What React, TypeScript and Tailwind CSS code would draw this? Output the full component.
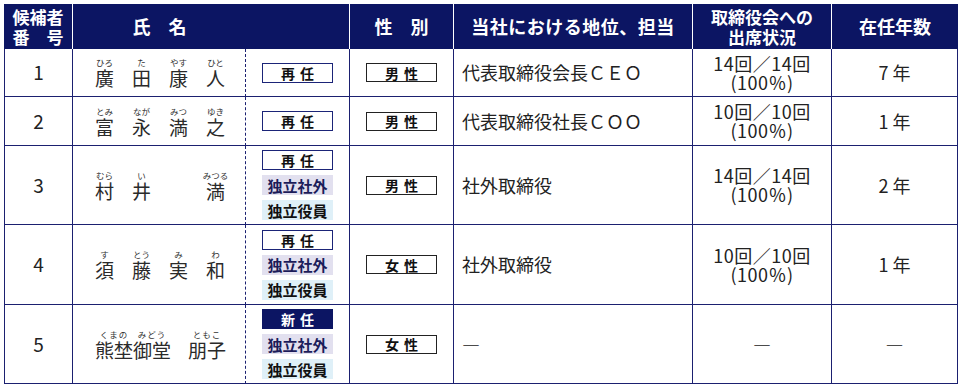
import React from 'react';

type Slot = { k: string; r: string } | null;

interface Row {
  no: string;
  slots?: Slot[];
  badges: string[];
  gender: string;
  pos: string;
  att: string[] | null;
  years: string | null;
}

const rows: Row[] = [
  {
    no: '1',
    slots: [{ k: '廣', r: 'ひろ' }, { k: '田', r: 'た' }, { k: '康', r: 'やす' }, { k: '人', r: 'ひと' }],
    badges: ['再任'],
    gender: '男性',
    pos: '代表取締役会長ＣＥＯ',
    att: ['14回／14回', '(100％)'],
    years: '7',
  },
  {
    no: '2',
    slots: [{ k: '富', r: 'とみ' }, { k: '永', r: 'なが' }, { k: '満', r: 'みつ' }, { k: '之', r: 'ゆき' }],
    badges: ['再任'],
    gender: '男性',
    pos: '代表取締役社長ＣＯＯ',
    att: ['10回／10回', '(100％)'],
    years: '1',
  },
  {
    no: '3',
    slots: [{ k: '村', r: 'むら' }, { k: '井', r: 'い' }, null, { k: '満', r: 'みつる' }],
    badges: ['再任', '独立社外', '独立役員'],
    gender: '男性',
    pos: '社外取締役',
    att: ['14回／14回', '(100％)'],
    years: '2',
  },
  {
    no: '4',
    slots: [{ k: '須', r: 'す' }, { k: '藤', r: 'とう' }, { k: '実', r: 'み' }, { k: '和', r: 'わ' }],
    badges: ['再任', '独立社外', '独立役員'],
    gender: '女性',
    pos: '社外取締役',
    att: ['10回／10回', '(100％)'],
    years: '1',
  },
  {
    no: '5',
    badges: ['新任', '独立社外', '独立役員'],
    gender: '女性',
    pos: '―',
    att: null,
    years: null,
  },
];

function Badge({ label }: { label: string }) {
  if (label === '再任')
    return (
      <div className="flex h-[20px] w-[71px] items-center justify-center border border-[#1b2478] bg-white pl-[5px] text-[14px] font-bold leading-none tracking-[5px] text-[#111]">
        再任
      </div>
    );
  if (label === '新任')
    return (
      <div className="flex h-[20px] w-[71px] items-center justify-center bg-[#0c1563] pl-[5px] text-[14px] font-bold leading-none tracking-[5px] text-white">
        新任
      </div>
    );
  if (label === '独立社外')
    return (
      <div className="flex h-[20px] w-[71px] items-center justify-center bg-[#e2e0ef] text-[15px] font-bold leading-none text-[#1c1c5a]">
        独立社外
      </div>
    );
  return (
    <div className="flex h-[20px] w-[71px] items-center justify-center bg-[#dff0f8] text-[15px] font-bold leading-none text-[#111]">
      独立役員
    </div>
  );
}

function NameSlots({ slots }: { slots: Slot[] }) {
  return (
    <div className="flex pl-[13px]">
      {slots.map((s, i) => (
        <div key={i} className="flex w-[37px] flex-col items-center">
          <span className="h-[10px] text-[8.5px] leading-[10px] text-[#333]">{s ? s.r : ''}</span>
          <span className="h-[21px] text-[19px] leading-[21px] text-[#2a2a2a]">{s ? s.k : ''}</span>
        </div>
      ))}
    </div>
  );
}

function Seg({ k, r }: { k: string; r: string }) {
  return (
    <div className="flex flex-col items-center">
      <span className="h-[10px] text-[8.5px] leading-[10px] tracking-[1px] text-[#333]">{r}</span>
      <span className="h-[21px] text-[19px] leading-[21px] text-[#2a2a2a]">{k}</span>
    </div>
  );
}

function LongName() {
  return (
    <div className="flex pl-[22px]">
      <Seg k="熊埜" r="くまの" />
      <Seg k="御堂" r="みどう" />
      <div className="ml-[17px]">
        <Seg k="朋子" r="ともこ" />
      </div>
    </div>
  );
}

export default function App() {
  return (
    <div className="h-[390px] w-[962px] bg-white pl-[4px] pt-[4px] font-['Noto_Sans_CJK_JP',sans-serif] text-[#222]">
      <div className="grid w-[954px] grid-cols-[69px_173px_104px_104px_239px_139px_126px] grid-rows-[45px_48px_49px_79px_80px_79px]">
        {/* header */}
        <div className="flex flex-col items-center justify-center border-r border-white bg-[#0c1563] text-[17px] font-bold leading-[20px] text-white">
          <span>候補者</span>
          <span>番　号</span>
        </div>
        <div className="col-span-2 flex items-center border-r border-white bg-[#0c1563] text-[18px] font-bold text-white">
          <span className="w-[173px] text-center">氏　名</span>
        </div>
        <div className="flex items-center justify-center border-r border-white bg-[#0c1563] text-[18px] font-bold text-white">
          性　別
        </div>
        <div className="flex items-center justify-center border-r border-white bg-[#0c1563] text-[18px] font-bold tracking-[0.5px] text-white">
          当社における地位、担当
        </div>
        <div className="flex flex-col items-center justify-center border-r border-white bg-[#0c1563] text-[17px] font-bold leading-[20px] text-white">
          <span>取締役会への</span>
          <span>出席状況</span>
        </div>
        <div className="flex items-center justify-center bg-[#0c1563] text-[18px] font-bold text-white">
          在任年数
        </div>

        {rows.map((row) => (
          <React.Fragment key={row.no}>
            <div className="flex items-center justify-center border-b border-l border-r border-[#1b2070] text-[19px]">
              {row.no}
            </div>
            <div className="flex items-center border-b border-r border-[#1b2070] [border-right-style:dashed]">
              {row.slots ? <NameSlots slots={row.slots} /> : <LongName />}
            </div>
            <div className="flex flex-col items-center justify-center gap-[5px] border-b border-r border-[#1b2070]">
              {row.badges.map((b) => (
                <Badge key={b} label={b} />
              ))}
            </div>
            <div className="flex items-center justify-center border-b border-r border-[#1b2070]">
              <div className="flex h-[19px] w-[71px] items-center justify-center border border-[#222] pl-[5px] text-[14px] font-bold leading-none tracking-[5px] text-[#111]">
                {row.gender}
              </div>
            </div>
            <div className="flex items-center border-b border-r border-[#1b2070] pl-[8px] text-[18px]">
              {row.pos}
            </div>
            <div className="flex flex-col items-center justify-center border-b border-r border-[#1b2070] text-[18px] leading-[19px]">
              {row.att ? (
                <>
                  <span className="tracking-[0.5px]">{row.att[0]}</span>
                  <span className="tracking-[0.5px]">{row.att[1]}</span>
                </>
              ) : (
                <span>―</span>
              )}
            </div>
            <div className="flex items-center justify-center border-b border-r border-[#1b2070] text-[18px]">
              {row.years ? (
                <span>
                  {row.years}
                  <span className="ml-[4px]">年</span>
                </span>
              ) : (
                <span>―</span>
              )}
            </div>
          </React.Fragment>
        ))}
      </div>
    </div>
  );
}
